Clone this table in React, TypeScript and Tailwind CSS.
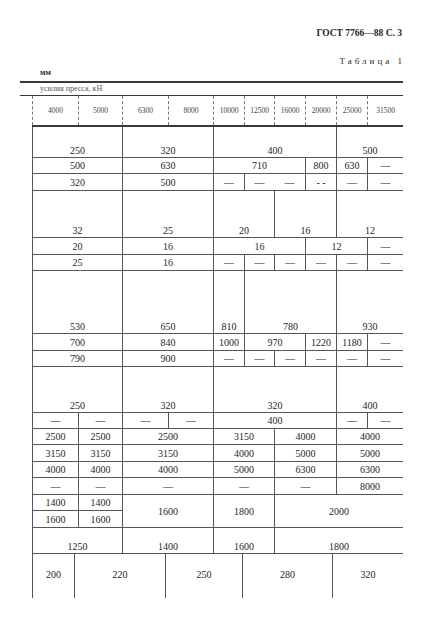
import React from "react";

type Cell = [number, number, number, string, ("b" | "c")?, number?, boolean?];

const CS: Record<number, string> = {
  1: "col-start-1", 2: "col-start-2", 3: "col-start-3", 4: "col-start-4", 5: "col-start-5",
  6: "col-start-6", 7: "col-start-7", 8: "col-start-8", 9: "col-start-9", 10: "col-start-10",
};
const SP: Record<number, string> = {
  1: "col-span-1", 2: "col-span-2", 3: "col-span-3", 4: "col-span-4",
};
const RS: Record<number, string> = {
  1: "row-start-1", 2: "row-start-2", 3: "row-start-3", 4: "row-start-4", 5: "row-start-5",
  6: "row-start-6", 7: "row-start-7", 8: "row-start-8", 9: "row-start-9", 10: "row-start-10",
  11: "row-start-11", 12: "row-start-12", 13: "row-start-13", 14: "row-start-14", 15: "row-start-15",
  16: "row-start-16", 17: "row-start-17", 18: "row-start-18",
};
const RSP: Record<number, string> = { 1: "row-span-1", 2: "row-span-2" };

const D = "—";

// [colStart, colSpan, row, text, align, rowSpan, noLeftBorder]
const cells: Cell[] = [
  [1, 2, 1, "250", "b"], [3, 2, 1, "320", "b"], [5, 4, 1, "400", "b"], [9, 2, 1, "500", "b"],
  [1, 2, 2, "500"], [3, 2, 2, "630"], [5, 3, 2, "710"], [8, 1, 2, "800"], [9, 1, 2, "630"], [10, 1, 2, D],
  [1, 2, 3, "320"], [3, 2, 3, "500"], [5, 1, 3, D], [6, 1, 3, D], [7, 1, 3, D, "c", 1, true], [8, 1, 3, "- -"], [9, 1, 3, D], [10, 1, 3, D],
  [1, 2, 4, "32", "b"], [3, 2, 4, "25", "b"], [5, 2, 4, "20", "b"], [7, 2, 4, "16", "b"], [9, 2, 4, "12", "b"],
  [1, 2, 5, "20"], [3, 2, 5, "16"], [5, 3, 5, "16"], [8, 2, 5, "12"], [10, 1, 5, D],
  [1, 2, 6, "25"], [3, 2, 6, "16"], [5, 1, 6, D], [6, 1, 6, D], [7, 1, 6, D], [8, 1, 6, D], [9, 1, 6, D], [10, 1, 6, D],
  [1, 2, 7, "530", "b"], [3, 2, 7, "650", "b"], [5, 1, 7, "810", "b"], [6, 3, 7, "780", "b"], [9, 2, 7, "930", "b"],
  [1, 2, 8, "700"], [3, 2, 8, "840"], [5, 1, 8, "1000"], [6, 2, 8, "970"], [8, 1, 8, "1220"], [9, 1, 8, "1180"], [10, 1, 8, D],
  [1, 2, 9, "790"], [3, 2, 9, "900"], [5, 1, 9, D], [6, 1, 9, D], [7, 1, 9, D], [8, 1, 9, D], [9, 1, 9, D], [10, 1, 9, D],
  [1, 2, 10, "250", "b"], [3, 2, 10, "320", "b"], [5, 4, 10, "320", "b"], [9, 2, 10, "400", "b"],
  [1, 1, 11, D], [2, 1, 11, D], [3, 1, 11, D], [4, 1, 11, D], [5, 4, 11, "400"], [9, 1, 11, D], [10, 1, 11, D],
  [1, 1, 12, "2500"], [2, 1, 12, "2500"], [3, 2, 12, "2500"], [5, 2, 12, "3150"], [7, 2, 12, "4000"], [9, 2, 12, "4000"],
  [1, 1, 13, "3150"], [2, 1, 13, "3150"], [3, 2, 13, "3150"], [5, 2, 13, "4000"], [7, 2, 13, "5000"], [9, 2, 13, "5000"],
  [1, 1, 14, "4000"], [2, 1, 14, "4000"], [3, 2, 14, "4000"], [5, 2, 14, "5000"], [7, 2, 14, "6300"], [9, 2, 14, "6300"],
  [1, 1, 15, D], [2, 1, 15, D], [3, 2, 15, D], [5, 2, 15, D], [7, 2, 15, D], [9, 2, 15, "8000"],
  [1, 1, 16, "1400"], [2, 1, 16, "1400"], [3, 2, 16, "1600", "c", 2], [5, 2, 16, "1800", "c", 2], [7, 4, 16, "2000", "c", 2],
  [1, 1, 17, "1600"], [2, 1, 17, "1600"],
  [1, 2, 18, "1250", "b"], [3, 2, 18, "1400", "b"], [5, 2, 18, "1600", "b"], [7, 4, 18, "1800", "b"],
];

const head = ["4000", "5000", "6300", "8000", "10000", "12500", "16000", "20000", "25000", "31500"];
const last = ["200", "220", "250", "280", "320"];

export default function App() {
  return (
    <div className="w-[427px] h-[641px] bg-white text-[#262626] font-['Liberation_Serif',serif] overflow-hidden">
      <div className="h-[81px] flex flex-col">
        <div className="pt-[27px] pr-[25px] text-right font-bold text-[9.5px] leading-[12px]">ГОСТ 7766—88 С. 3</div>
        <div className="mt-[16px] pr-[22px] text-right text-[9px] leading-[12px] tracking-[3px]">Таблица 1</div>
        <div className="mt-[1px] pl-[40px] text-[8px] leading-[10px] font-bold">мм</div>
      </div>
      <div className="ml-[20px] w-[383px]">
        <div className="h-[15px] border-t-2 border-b border-[#3a3a3a] pl-[20px] text-[8px] leading-[12px] text-[#555]">
          усилия пресса, кН
        </div>
        <div className="ml-[12px] h-[31px] grid grid-cols-[46px_44px_46px_45px_31px_30px_31px_31px_31px_36px] border-b-2 border-[#3a3a3a]">
          {head.map((h, i) => (
            <div
              key={i}
              className="border-l border-dashed border-[#777] flex items-center justify-center text-[7.5px] text-[#444]"
            >
              {h}
            </div>
          ))}
        </div>
        <div className="ml-[12px] grid grid-cols-[46px_44px_46px_45px_31px_30px_31px_31px_31px_36px] grid-rows-[31px_16px_17px_47px_17px_16px_63px_17px_16px_46px_16px_16px_17px_16px_17px_16px_17px_26px] text-[10px] leading-[11px]">
          {cells.map(([c, s, r, t, a, rs, nl], i) => (
            <div
              key={i}
              className={`${CS[c]} ${SP[s]} ${RS[r]} ${RSP[rs ?? 1]} ${nl ? "border-l-0" : "border-l"} border-b border-[#555] flex justify-center ${
                a === "b" ? "items-end pb-[1px]" : "items-center"
              }`}
            >
              {t}
            </div>
          ))}
        </div>
        <div className="ml-[12px] h-[44px] grid grid-cols-[42px_91px_77px_90px_71px] text-[10px] leading-[11px]">
          {last.map((t, i) => (
            <div key={i} className="border-l border-[#555] flex items-center justify-center pb-[4px]">
              {t}
            </div>
          ))}
        </div>
      </div>
    </div>
  );
}
